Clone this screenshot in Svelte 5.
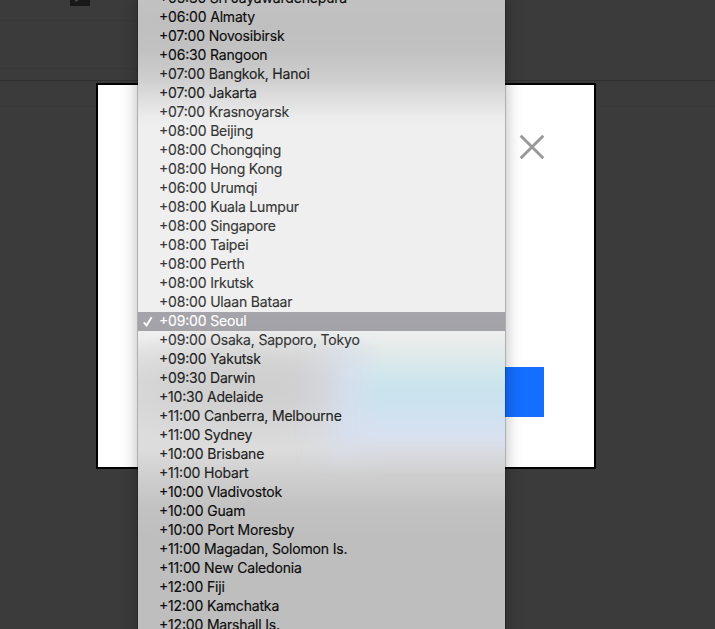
<script>
  const zones = [
    ['+05:30', 'Sri Jayawardenepura'],
    ['+06:00', 'Almaty'],
    ['+07:00', 'Novosibirsk'],
    ['+06:30', 'Rangoon'],
    ['+07:00', 'Bangkok, Hanoi'],
    ['+07:00', 'Jakarta'],
    ['+07:00', 'Krasnoyarsk'],
    ['+08:00', 'Beijing'],
    ['+08:00', 'Chongqing'],
    ['+08:00', 'Hong Kong'],
    ['+06:00', 'Urumqi'],
    ['+08:00', 'Kuala Lumpur'],
    ['+08:00', 'Singapore'],
    ['+08:00', 'Taipei'],
    ['+08:00', 'Perth'],
    ['+08:00', 'Irkutsk'],
    ['+08:00', 'Ulaan Bataar'],
    ['+09:00', 'Seoul'],
    ['+09:00', 'Osaka, Sapporo, Tokyo'],
    ['+09:00', 'Yakutsk'],
    ['+09:30', 'Darwin'],
    ['+10:30', 'Adelaide'],
    ['+11:00', 'Canberra, Melbourne'],
    ['+11:00', 'Sydney'],
    ['+10:00', 'Brisbane'],
    ['+11:00', 'Hobart'],
    ['+10:00', 'Vladivostok'],
    ['+10:00', 'Guam'],
    ['+10:00', 'Port Moresby'],
    ['+11:00', 'Magadan, Solomon Is.'],
    ['+11:00', 'New Caledonia'],
    ['+12:00', 'Fiji'],
    ['+12:00', 'Kamchatka'],
    ['+12:00', 'Marshall Is.']
  ];
  let selected = $state('Seoul');

  // Text is lighter where the menu material is brightest.
  const tone = (i) => (i >= 6 && i <= 18 ? 'soft' : (i >= 4 && i <= 5) || (i >= 19 && i <= 25) ? 'mid' : 'strong');
</script>

<div class="screen">
  <div class="backdrop">
    <div class="tile">
      <svg width="20" height="6" viewBox="0 0 20 6"><path d="M5 0h4L5.500 2z" fill="#4a4a4a" /></svg>
    </div>
  </div>

  <div class="dialog">
    <button class="close" aria-label="Close">
      <svg width="26" height="26" viewBox="0 0 26 26"><path d="M1.700 1.700 24.300 24.300M24.300 1.700 1.700 24.300" stroke="#999" stroke-width="2.900" fill="none" /></svg>
    </button>
    <button class="save" aria-label="Save"></button>
  </div>

  <div class="menu" role="listbox">
    <div class="tint"></div>
    {#each zones as [offset, city], i}
      <div class="option {tone(i)}" class:selected={city === selected} role="option" aria-selected={city === selected} tabindex="-1" onclick={() => (selected = city)} onkeydown={() => {}}>
        <span class="mark">
          {#if city === selected}
            <svg width="12" height="12" viewBox="0 0 12 12"><path d="M1.800 6.300 4.600 9.500 9.600 1.200" fill="none" stroke="#fff" stroke-width="1.900" /></svg>
          {/if}
        </span>
        <span class="label"><span class="offset">{offset}</span> {city}</span>
      </div>
    {/each}
  </div>
</div>

<style>
  .screen {
    position: relative;
    width: 715px;
    height: 629px;
    overflow: hidden;
    background: #3b3b3b;
    font-family: Inter, 'Liberation Sans', sans-serif;
    display: flex;
    flex-direction: column;
    box-sizing: border-box;
    padding: 83px 0 0 96px;
  }
  .backdrop {
    position: absolute;
    inset: 0;
    background:
      linear-gradient(#383838, #383838) 0 20px / 138px 1px no-repeat,
      linear-gradient(#383838, #383838) 0 68px / 138px 1px no-repeat,
      linear-gradient(#303030, #303030) 0 80px / 100% 1px no-repeat,
      linear-gradient(#383838, #383838) 0 106px / 100% 1px no-repeat;
  }
  .tile {
    width: 20px;
    height: 6px;
    margin-left: 70px;
    background: #181818;
    display: flex;
  }
  .dialog {
    position: relative;
    box-sizing: border-box;
    width: 500px;
    height: 386px;
    border: 2px solid #000;
    background: #fff;
    padding: 49px 50px 50px;
    display: flex;
    flex-direction: column;
    align-items: flex-end;
    justify-content: space-between;
  }
  button {
    border: 0;
    padding: 0;
    background: none;
  }
  .close {
    display: flex;
    width: 26px;
    height: 26px;
    margin-right: -1px;
  }
  .save {
    width: 120px;
    height: 50px;
    background: #146eff;
  }
  .menu {
    position: absolute;
    left: 138px;
    top: -11px;
    width: 367px;
    height: 660px;
    box-shadow: 0 0 0 1px rgba(0, 0, 0, 0.2), 0 6px 16px rgba(0, 0, 0, 0.3);
    background:
      radial-gradient(ellipse 175px 62px at 115px 397px, #cecece 0, #cfcfcfcc 40%, #d8d8d800 100%),
      linear-gradient(#c3c3c3 0, #bfbfbf 35px, #c2c2c2 62px, #cecece 90px, #dcdcdc 107px, #ebebeb 127px, #efefef 138px, #efefef 345px, #e6e6e6 366px, #dddddd 395px, #dcdcdc 460px, #d0d0d0 484px, #c3c3c3 516px, #bebebe 545px, #bebebe 100%);
  }
  .tint {
    position: absolute;
    left: 150px;
    right: 0;
    top: 340px;
    height: 160px;
    background:
      linear-gradient(90deg, #d6dff0 0, #d6dff0 45px, #d6dff000 95px) 0 0 / 100% 100% no-repeat,
      linear-gradient(#e9f0ec 0, #e4eeec 15px, #d5e8ec 38px, #c9e3ed 60px, #cbe2ee 75px, #d3e1f0 93px, #d8e1f0 108px, #d8dbe8 122px, #d2d2d5 150px);
    mask-image:
      linear-gradient(90deg, transparent 5px, rgba(0, 0, 0, 0.3) 35px, rgba(0, 0, 0, 0.85) 58px, #000 90px),
      linear-gradient(transparent 0, rgba(0, 0, 0, 0.6) 20px, #000 42px, #000 105px, rgba(0, 0, 0, 0.6) 122px, transparent 148px);
    mask-composite: intersect;
  }
  .option {
    position: relative;
    height: 19px;
    display: flex;
    align-items: center;
    font-size: 14px;
    line-height: 19px;
    white-space: nowrap;
    color: #0c0c0c;
  }
  .mid {
    color: #222;
  }
  .soft {
    color: #363636;
  }
  .mark {
    width: 17px;
    padding-left: 4px;
    display: flex;
  }
  .label {
    letter-spacing: -0.18px;
    margin-top: -2px;
    -webkit-text-stroke: 0.15px;
  }
  .offset {
    font-feature-settings: 'case';
  }
  .selected {
    background: linear-gradient(#a5a4ab, #a3a2a7);
    color: #fff;
  }
</style>
